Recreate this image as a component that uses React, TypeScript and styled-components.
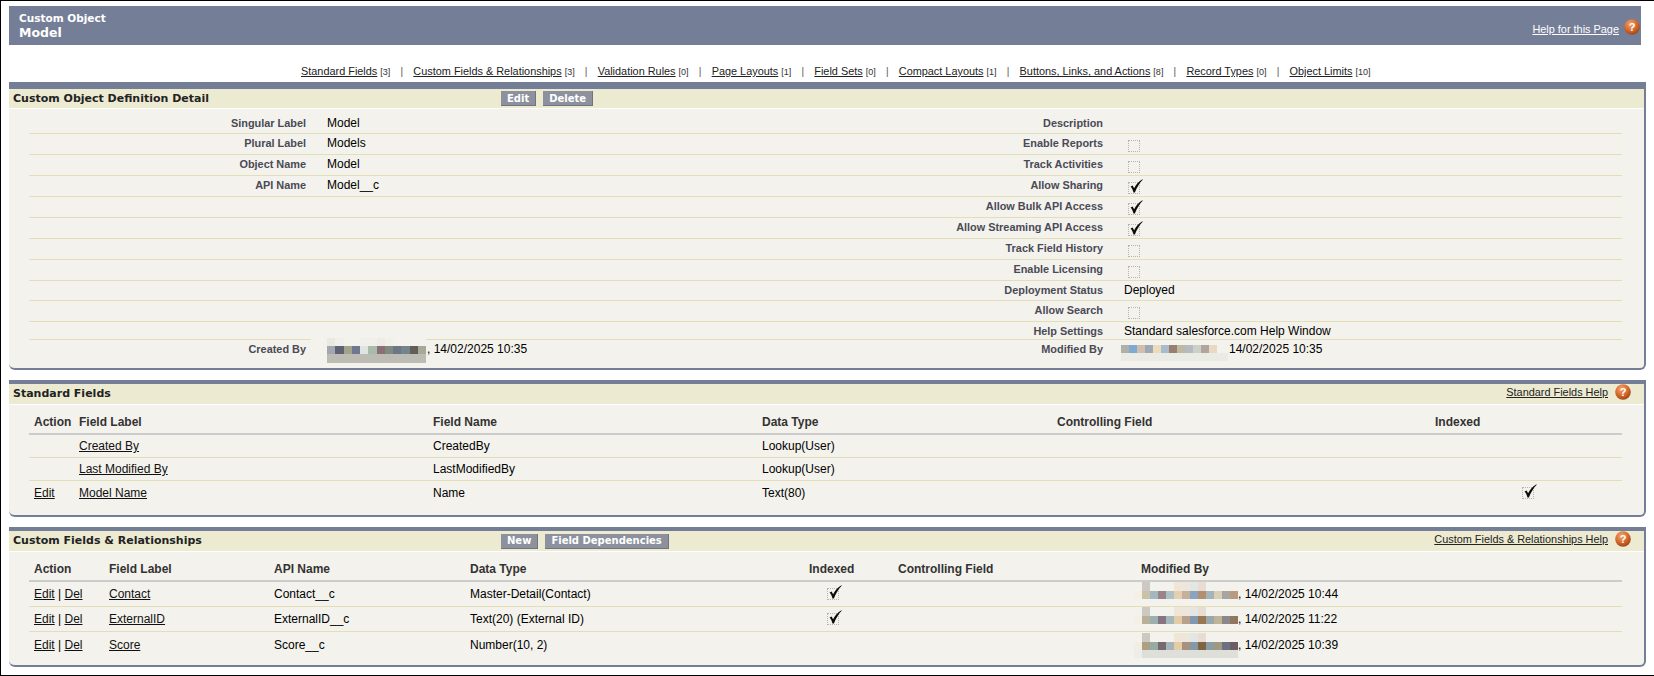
import React from 'react';
import styled, { createGlobalStyle } from 'styled-components';

const GlobalStyle = createGlobalStyle`
  html, body {
    margin: 0;
    padding: 0;
    background: #fff;
  }
  body {
    font-family: "Liberation Sans", Arial, sans-serif;
    font-size: 12px;
    color: #000;
  }
`;

const Page = styled.div`
  box-sizing: border-box;
  width: 1654px;
  height: 676px;
  overflow: hidden;
  background: #fff;
  border-top: 1px solid #000;
  border-bottom: 1px solid #000;
  border-left: 1px solid #000;
  padding: 5px 0 0 8px;
`;

const PageHeader = styled.header`
  box-sizing: border-box;
  width: 1632px;
  height: 39px;
  background: #757e97;
  padding: 5px 0 0 10px;
  display: flex;
  justify-content: space-between;
  color: #fff;
`;

const HeaderTitles = styled.div`
  font-family: "DejaVu Sans", Verdana, sans-serif;
  font-weight: bold;
`;

const ObjectType = styled.div`
  font-size: 10.5px;
  line-height: 14px;
`;

const ObjectName = styled.div`
  font-size: 12.5px;
  line-height: 15px;
`;

const HeaderHelp = styled.div`
  display: flex;
  align-items: center;
  gap: 5px;
  height: 16px;
  margin: 10px 1px 0 0;
`;

const WhiteLink = styled.a`
  font-size: 10.9px;
  color: #fff;
  text-decoration: underline;
`;

const Nav = styled.nav`
  height: 37px;
  box-sizing: border-box;
  padding: 16px 0 0 292px;
  display: flex;
  align-items: center;
  height: 37px;
  font-size: 10.9px;
  line-height: 14px;
`;

const NavItem = styled.span`
  display: inline-flex;
  align-items: baseline;
  gap: 3px;
`;

const NavLink = styled.a`
  color: #222;
  text-decoration: underline;
`;

const NavCount = styled.span`
  font-size: 9px;
  color: #333;
`;

const NavSep = styled.span`
  width: 23px;
  text-align: center;
  color: #555;
  font-size: 10px;
`;

const Section = styled.section<{ $bar: number; $gap: number }>`
  box-sizing: border-box;
  width: 1637px;
  background: #f3f2ec;
  border-top: ${p => p.$bar}px solid #757e97;
  border-right: 2px solid #757e97;
  border-bottom: 2px solid #757e97;
  border-radius: 0 0 6px 6px;
  margin-bottom: ${p => p.$gap}px;
`;

const Band = styled.div<{ $h: number }>`
  box-sizing: border-box;
  height: ${p => p.$h}px;
  background: #edead2;
  border-bottom: 1px solid #fff;
  display: flex;
  align-items: center;
  padding: 0 13px 0 4px;
`;

const BandTitle = styled.h3`
  width: 488px;
  flex: none;
  margin: 0;
  font-family: "DejaVu Sans", Verdana, sans-serif;
  font-size: 11px;
  line-height: 14px;
  font-weight: bold;
  color: #222;
`;

const BandButtons = styled.div`
  display: flex;
  gap: 7px;
`;

const Btn = styled.button`
  box-sizing: border-box;
  height: 15px;
  padding: 0 6px;
  border: 0;
  border-right: 1px solid #6f7480;
  border-bottom: 1px solid #6f7480;
  background: #8d919e;
  color: #fff;
  font-family: "DejaVu Sans", Verdana, sans-serif;
  font-size: 10px;
  font-weight: bold;
  line-height: 13px;
`;

const BandHelp = styled.div`
  margin-left: auto;
  display: flex;
  align-items: center;
  gap: 7px;
`;

const HelpLink = styled.a`
  font-size: 10.9px;
  color: #222;
  text-decoration: underline;
  margin-top: -4px;
`;

const HelpIconWrap = styled.svg`
  display: block;
  flex: none;
  margin-top: -4px;
`;

const DetailBody = styled.div`
  padding: 5px 22px 0 20px;
  height: 259px;
  box-sizing: border-box;
`;

const DetailRow = styled.div<{ $h: number; $last?: boolean }>`
  box-sizing: border-box;
  height: ${p => p.$h}px;
  display: grid;
  grid-template-columns: 277px 500px 297px 1fr;
  border-bottom: ${p => (p.$last ? 'none' : '1px solid #e3deb8')};
`;

const FieldLabel = styled.div`
  padding-top: 2px;
  text-align: right;
  font-size: 10.9px;
  line-height: 14px;
  font-weight: bold;
  color: #4a4a56;
`;

const FieldValue = styled.div`
  padding: 2px 0 0 21px;
  font-size: 12px;
  line-height: 14px;
  color: #000;
`;

const CheckBoxMark = styled.div`
  position: relative;
  box-sizing: border-box;
  width: 12px;
  height: 12px;
  border: 1px dotted #b4b4b0;
  margin: 4px 0 0 4px;
`;

const ListCheck = styled(CheckBoxMark)<{ $shift: number }>`
  margin: 0 0 0 ${p => p.$shift}px;
`;

const TickSvg = styled.svg`
  position: absolute;
  left: 1px;
  top: -4px;
`;

const ListHead = styled.div<{ $cols: string; $h: number; $mt: number }>`
  box-sizing: border-box;
  height: ${p => p.$h}px;
  margin: ${p => p.$mt}px 22px 0 20px;
  padding-left: 5px;
  display: grid;
  grid-template-columns: ${p => p.$cols};
  align-items: center;
  font-size: 12px;
  font-weight: bold;
  color: #333;
  border-bottom: 2px solid #ccc;
`;

const ListRow = styled.div<{ $cols: string; $h: number; $last?: boolean }>`
  box-sizing: border-box;
  height: ${p => p.$h}px;
  margin: 0 22px 0 20px;
  padding-left: 5px;
  display: grid;
  grid-template-columns: ${p => p.$cols};
  align-items: center;
  font-size: 12px;
  line-height: 14px;
  border-bottom: ${p => (p.$last ? 'none' : '1px solid #e3deb8')};
`;

const CellLink = styled.a`
  color: #111;
  text-decoration: underline;
`;

const ListBottom = styled.div<{ $h: number }>`
  height: ${p => p.$h}px;
`;

const BlurSlot = styled.span<{ $w: number }>`
  position: relative;
  display: inline-block;
  width: ${p => p.$w}px;
  height: 14px;
  vertical-align: top;
`;

const BlurSvg = styled.svg<{ $left: number; $top: number }>`
  position: absolute;
  left: ${p => p.$left}px;
  top: ${p => p.$top}px;
`;

const Tick = () => (
  <TickSvg width="13" height="14" viewBox="0 0 13 14">
    <path
      d="M0.6 7.4 L2.6 6.4 L4.1 9.2 C6 5.4 9 2.2 12.4 0.2 L12.7 0.8 C9.6 4 6.8 8.4 4.9 13.4 L3.5 13.4 C2.9 10.8 1.9 8.9 0.6 7.4 Z"
      fill="#0b0b0b"
    />
  </TickSvg>
);

const HelpIcon = ({ id }: { id: string }) => (
  <HelpIconWrap width="16" height="16" viewBox="0 0 16 16">
    <defs>
      <radialGradient id={id} cx="40%" cy="30%" r="75%">
        <stop offset="0%" stopColor="#f0a672" />
        <stop offset="55%" stopColor="#d96a2b" />
        <stop offset="100%" stopColor="#94431a" />
      </radialGradient>
    </defs>
    <circle cx="8" cy="8" r="7.8" fill={`url(#${id})`} />
    <text
      x="8"
      y="11.6"
      textAnchor="middle"
      fontFamily='"Liberation Sans", Arial, sans-serif'
      fontSize="11"
      fontWeight="bold"
      fill="#fff"
    >
      ?
    </text>
  </HelpIconWrap>
);

type Strip = { x: number; y: number; cell: number; h: number; colors: string[] };

const Blur = ({ w, left, top, boxW, boxH, strips }: {
  w: number;
  left: number;
  top: number;
  boxW: number;
  boxH: number;
  strips: Strip[];
}) => (
  <BlurSlot $w={w}>
    <BlurSvg $left={left} $top={top} width={boxW} height={boxH} shapeRendering="crispEdges">
      <rect width={boxW} height={boxH} fill="#f3f2ec" />
      {strips.map((s, i) =>
        s.colors.map((c, j) => (
          <rect key={`${i}-${j}`} x={s.x + j * s.cell} y={s.y} width={s.cell} height={s.h} fill={c} />
        ))
      )}
    </BlurSvg>
  </BlurSlot>
);

const none = '#f3f2ec';

const createdStrips: Strip[] = [
  { x: 16, y: 0, cell: 8.25, h: 8, colors: ['#e9e8e1', '#f0f0ea', none, none, '#f0f0ea', '#f0f0ea', '#efeae6', '#f1f1eb'] },
  { x: 16, y: 8, cell: 8.25, h: 8, colors: ['#a0a8ae', '#5f6272', '#a3a38c', '#6f7890', '#e0e4e0', '#a9bbab', '#8a7074', '#808a7e', '#6d7684', '#75848a', '#5f5f58', '#a8a896'] },
  { x: 16, y: 16, cell: 99, h: 9, colors: ['#bcbcb4'] },
];

const modifiedStrips: Strip[] = [
  { x: 0, y: 0, cell: 8, h: 8, colors: ['#b0b0a8', '#7fa9ce', '#d0bfae', '#a0a8b8', '#ebdcbc', '#a8bccb', '#988070', '#bfb8a2', '#b4bcc2', '#ccd0c8', '#b4a49e', '#e8d9c2'] },
  { x: 0, y: 8, cell: 107, h: 8, colors: ['#ebebe5'] },
];

const listTop = ['#f3f2ec', '#cdc8c2', '#f3f3ed', none, none, '#efe6d8', '#ece6dc', '#e4e6e4', '#e8dcd4'];

const listStrips: Strip[][] = [
  [
    { x: 9, y: 0, cell: 8, h: 9, colors: listTop },
    { x: 9, y: 9, cell: 8, h: 8, colors: ['#f5f0e4', '#c8c2aa', '#a3b8be', '#9a8488', '#aec2c6', '#e2d0b0', '#c4b09c', '#8aa4c0', '#b09070', '#a4b4b8', '#d8cfb8', '#a8a4a0', '#b89a80'] },
  ],
  [
    { x: 9, y: 0, cell: 8, h: 9, colors: listTop },
    { x: 9, y: 9, cell: 8, h: 8, colors: ['#f5f0e4', '#b8b098', '#9cb0b4', '#887480', '#a4b8bc', '#e4cca8', '#b8a08c', '#8098b0', '#987850', '#98a8ac', '#c0b498', '#8a8888', '#907860'] },
  ],
  [
    { x: 9, y: 0, cell: 8, h: 9, colors: listTop },
    { x: 9, y: 9, cell: 8, h: 8, colors: ['#f2efe2', '#ac9f84', '#94aca4', '#786870', '#a4b4b8', '#e4cca4', '#a89080', '#8498a8', '#806440', '#8a9ca4', '#a09880', '#6c7080', '#6c5c64'] },
    { x: 9, y: 17, cell: 8, h: 8, colors: ['#eeeee8', ...Array(12).fill('#dedfd8')] },
  ],
];

const navItems: [string, number][] = [
  ['Standard Fields', 3],
  ['Custom Fields & Relationships', 3],
  ['Validation Rules', 0],
  ['Page Layouts', 1],
  ['Field Sets', 0],
  ['Compact Layouts', 1],
  ['Buttons, Links, and Actions', 8],
  ['Record Types', 0],
  ['Object Limits', 10],
];

// one entry per row of the detail block, [left label, left value, right label, right value, height]
type RightValue = string | boolean | undefined;
const detailRows: [string, string, string, RightValue, number][] = [
  ['Singular Label', 'Model', 'Description', undefined, 20],
  ['Plural Label', 'Models', 'Enable Reports', false, 21],
  ['Object Name', 'Model', 'Track Activities', false, 21],
  ['API Name', 'Model__c', 'Allow Sharing', true, 21],
  ['', '', 'Allow Bulk API Access', true, 21],
  ['', '', 'Allow Streaming API Access', true, 21],
  ['', '', 'Track Field History', false, 21],
  ['', '', 'Enable Licensing', false, 21],
  ['', '', 'Deployment Status', 'Deployed', 20],
  ['', '', 'Allow Search', false, 21],
  ['', '', 'Help Settings', 'Standard salesforce.com Help Window', 18],
];

const stdCols = '45px 354px 329px 295px 378px 1fr';
const customCols = '75px 165px 196px 339px 89px 243px 1fr';

const customRows = [
  { label: 'Contact', api: 'Contact__c', type: 'Master-Detail(Contact)', indexed: true, when: '14/02/2025 10:44' },
  { label: 'ExternalID', api: 'ExternalID__c', type: 'Text(20) (External ID)', indexed: true, when: '14/02/2025 11:22' },
  { label: 'Score', api: 'Score__c', type: 'Number(10, 2)', indexed: false, when: '14/02/2025 10:39' },
];

export default function App() {
  return (
    <Page>
      <GlobalStyle />
      <PageHeader>
        <HeaderTitles>
          <ObjectType>Custom Object</ObjectType>
          <ObjectName>Model</ObjectName>
        </HeaderTitles>
        <HeaderHelp>
          <WhiteLink>Help for this Page</WhiteLink>
          <HelpIcon id="help-page" />
        </HeaderHelp>
      </PageHeader>

      <Nav>
        {navItems.map(([name, count], i) => (
          <React.Fragment key={name}>
            {i > 0 && <NavSep>|</NavSep>}
            <NavItem>
              <NavLink>{name}</NavLink>
              <NavCount>[{count}]</NavCount>
            </NavItem>
          </React.Fragment>
        ))}
      </Nav>

      <Section $bar={7} $gap={10}>
        <Band $h={20}>
          <BandTitle>Custom Object Definition Detail</BandTitle>
          <BandButtons>
            <Btn>Edit</Btn>
            <Btn>Delete</Btn>
          </BandButtons>
        </Band>
        <DetailBody>
          {detailRows.map(([l, v, rl, rv, h]) => (
            <DetailRow key={rl} $h={h}>
              <FieldLabel>{l}</FieldLabel>
              <FieldValue>{v}</FieldValue>
              <FieldLabel>{rl}</FieldLabel>
              {typeof rv === 'boolean' ? (
                <FieldValue>
                  <CheckBoxMark>{rv && <Tick />}</CheckBoxMark>
                </FieldValue>
              ) : (
                <FieldValue>{rv}</FieldValue>
              )}
            </DetailRow>
          ))}
          <DetailRow $h={24} $last>
            <FieldLabel>Created By</FieldLabel>
            <FieldValue>
              <Blur w={100} left={-16} top={-4} boxW={115} boxH={25} strips={createdStrips} />
              , 14/02/2025 10:35
            </FieldValue>
            <FieldLabel>Modified By</FieldLabel>
            <FieldValue>
              <Blur w={105} left={-3} top={3} boxW={107} boxH={16} strips={modifiedStrips} />
              14/02/2025 10:35
            </FieldValue>
          </DetailRow>
        </DetailBody>
      </Section>

      <Section $bar={4} $gap={10}>
        <Band $h={21}>
          <BandTitle>Standard Fields</BandTitle>
          <BandHelp>
            <HelpLink>Standard Fields Help</HelpLink>
            <HelpIcon id="help-std" />
          </BandHelp>
        </Band>
        <ListHead $cols={stdCols} $h={25} $mt={5}>
          <span>Action</span>
          <span>Field Label</span>
          <span>Field Name</span>
          <span>Data Type</span>
          <span>Controlling Field</span>
          <span>Indexed</span>
        </ListHead>
        <ListRow $cols={stdCols} $h={23}>
          <span />
          <CellLink>Created By</CellLink>
          <span>CreatedBy</span>
          <span>Lookup(User)</span>
        </ListRow>
        <ListRow $cols={stdCols} $h={23}>
          <span />
          <CellLink>Last Modified By</CellLink>
          <span>LastModifiedBy</span>
          <span>Lookup(User)</span>
        </ListRow>
        <ListRow $cols={stdCols} $h={23} $last>
          <CellLink>Edit</CellLink>
          <CellLink>Model Name</CellLink>
          <span>Name</span>
          <span>Text(80)</span>
          <span />
          <ListCheck $shift={87}><Tick /></ListCheck>
        </ListRow>
        <ListBottom $h={11} />
      </Section>

      <Section $bar={4} $gap={0}>
        <Band $h={21}>
          <BandTitle>Custom Fields &amp; Relationships</BandTitle>
          <BandButtons>
            <Btn>New</Btn>
            <Btn>Field Dependencies</Btn>
          </BandButtons>
          <BandHelp>
            <HelpLink>Custom Fields &amp; Relationships Help</HelpLink>
            <HelpIcon id="help-custom" />
          </BandHelp>
        </Band>
        <ListHead $cols={customCols} $h={25} $mt={5}>
          <span>Action</span>
          <span>Field Label</span>
          <span>API Name</span>
          <span>Data Type</span>
          <span>Indexed</span>
          <span>Controlling Field</span>
          <span>Modified By</span>
        </ListHead>
        {customRows.map((r, i) => (
          <ListRow key={r.label} $cols={customCols} $h={25} $last={i === 2}>
            <span>
              <CellLink>Edit</CellLink> | <CellLink>Del</CellLink>
            </span>
            <CellLink>{r.label}</CellLink>
            <span>{r.api}</span>
            <span>{r.type}</span>
            {r.indexed ? <ListCheck $shift={18}><Tick /></ListCheck> : <span />}
            <span />
            <span>
              <Blur
                w={97}
                left={-16}
                top={-5}
                boxW={113}
                boxH={i === 2 ? 25 : 17}
                strips={listStrips[i]}
              />
              , {r.when}
            </span>
          </ListRow>
        ))}
        <ListBottom $h={8} />
      </Section>
    </Page>
  );
}
